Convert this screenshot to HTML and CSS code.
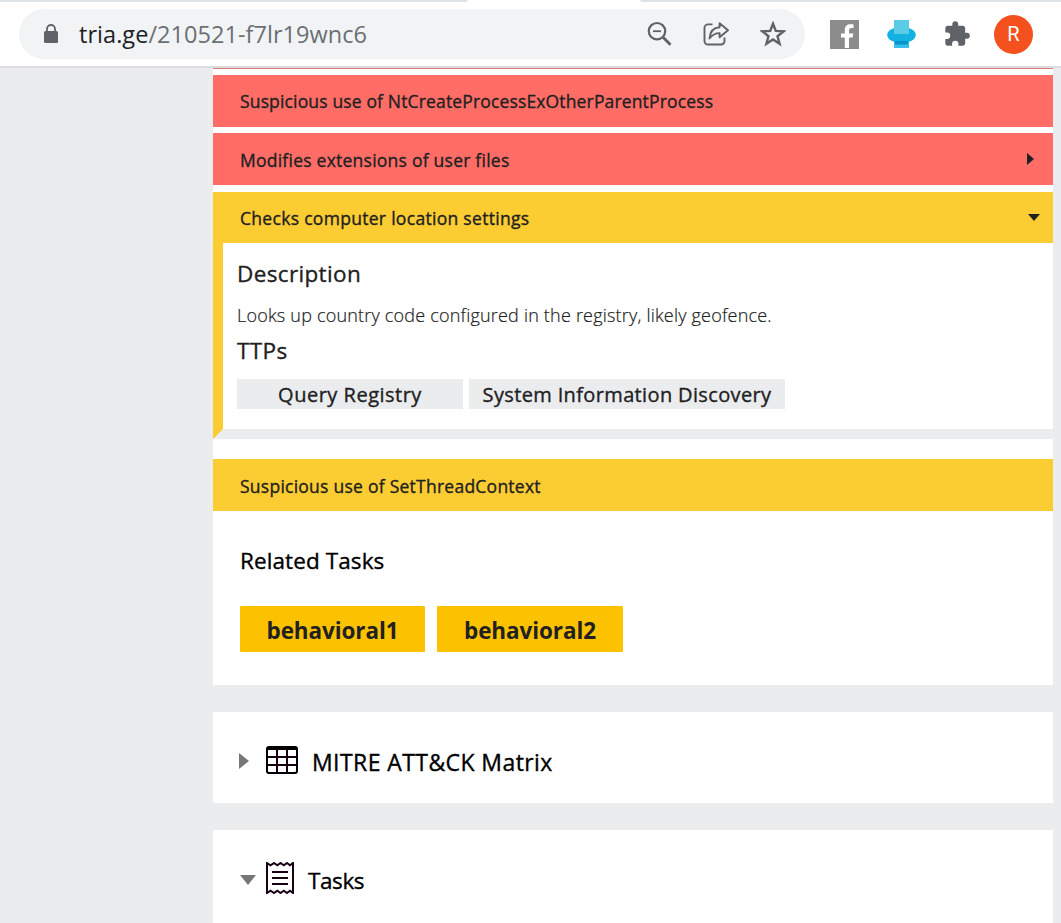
FILE: index.html
```html
<!DOCTYPE html>
<html lang="en">
<head>
<meta charset="utf-8">
<title>tria.ge</title>
<link rel="stylesheet" href="styles.css">
</head>
<body>
<header class="browser">
  <div class="tabs"><span class="tab tab-left"></span><span class="tab tab-right"></span></div>
  <div class="toolbar">
    <div class="address">
      <svg class="lock" width="16" height="20" viewBox="0 0 16 20"><path d="M4 8V5a4 4 0 0 1 8 0v3" fill="none" stroke="#5f6368" stroke-width="1.8"/><rect x="1" y="7" width="14" height="12" rx="1.5" fill="#5f6368"/></svg>
      <span class="url"><b class="host">tria.ge</b>/210521-f7lr19wnc6</span>
      <svg class="act" width="26" height="26" viewBox="0 0 26 26" fill="none" stroke="#5f6368"><circle cx="11" cy="10.2" r="8.2" stroke-width="2.2"/><path d="M7 10.2h8" stroke-width="1.8"/><path d="M17 16.2L24.500 23.700" stroke-width="2.8"/></svg>
      <svg class="act" width="26" height="26" viewBox="0 0 26 26" fill="none" stroke="#5f6368" stroke-width="1.9" stroke-linejoin="round"><path d="M9.5 3.4H5a3.5 3.5 0 0 0-3.5 3.5V20A3.500 3.500 0 0 0 5 23.500h13a3.500 3.500 0 0 0 3.500-3.500v-3.500"/><path d="M6.500 17.500C7 10.500 10.500 6.600 16.600 6.200V2.200L25 9.300l-8.400 7v-4.200C12 12 9.500 13.600 6.500 17.500z"/></svg>
      <svg class="act" width="26" height="26" viewBox="0 0 26 26" fill="none" stroke="#5f6368" stroke-width="2.400"><path d="M13 2.700l2.800 7.200 7.700.5-6 4.800 2.100 7.600L13 18.500l-6.600 4.300 2.100-7.600-6-4.800 7.700-.5z"/></svg>
    </div>
    <svg class="ext facebook" width="29" height="29" viewBox="0 0 29 29"><path d="M0 0h29v29H0z" fill="#8c8c8c"/><path d="M14.800 28V17.600H11v-4h3.800V10c0-3.800 2.200-5.700 5.600-5.700 1.600 0 3.100.2 3.100.2v3.600h-2c-1.700 0-2.500.9-2.500 2.300v3.200h4.300l-.7 4H19V28z" fill="#fff"/></svg>
    <svg class="ext printer" width="29" height="29" viewBox="0 0 29 29"><path d="M7 20h15v8H7z" fill="#36bfe8"/><ellipse cx="14.500" cy="15" rx="14.300" ry="8" fill="#13b1e2"/><path d="M7 0h15v14H7z" fill="#5bcbe6"/><path d="M8 21h13v3.500H8z" fill="#0795cc"/></svg>
    <svg class="ext puzzle" width="28" height="28" viewBox="0 0 24 24"><path fill="#5f6368" d="M20.500 11H19V7c0-1.100-.9-2-2-2h-4V3.500a2.500 2.500 0 0 0-5 0V5H4c-1.100 0-2 .9-2 2v3.800h1.500a2.700 2.700 0 0 1 0 5.400H2V20c0 1.100.9 2 2 2h3.800v-1.500a2.700 2.700 0 0 1 5.400 0V22H17c1.100 0 2-.9 2-2v-4h1.500a2.500 2.500 0 0 0 0-5z"/></svg>
    <span class="avatar">R</span>
  </div>
</header>
<main class="page">
  <section class="panel signatures">
    <div class="sliver"></div>
    <div class="sig red"><span class="t1">Suspicious use of NtCreateProcessExOtherParentProcess</span></div>
    <div class="sig red"><span class="t2">Modifies extensions of user files</span><i class="caret-right"></i></div>
    <div class="sig yellow open"><span class="t3">Checks computer location settings</span><i class="caret-down"></i></div>
    <div class="detail">
      <h3 class="desc-title">Description</h3>
      <p class="desc">Looks up country code configured in the registry, likely geofence.</p>
      <h3 class="ttps-title">TTPs</h3>
      <div class="ttps"><span class="ttp query">Query Registry</span><span class="ttp discovery">System Information Discovery</span></div>
    </div>
    <div class="sig yellow last"><span class="t4">Suspicious use of SetThreadContext</span></div>
    <h2 class="related">Related Tasks</h2>
    <div class="tasks"><span class="task first">behavioral1</span><span class="task">behavioral2</span></div>
  </section>
  <section class="panel fold matrix">
    <i class="fold-right"></i>
    <svg class="grid-icon" width="32" height="28" viewBox="0 0 32 28"><rect x="1" y="1" width="30" height="26" rx="2" fill="none" stroke="#000" stroke-width="2"/><path d="M1 2.500h30" stroke="#000" stroke-width="3"/><path d="M1 11h30M1 19h30M11 3v24M21 3v24" stroke="#170013" stroke-width="2"/></svg>
    <h2 class="matrix-title">MITRE ATT&amp;CK Matrix</h2>
  </section>
  <section class="panel fold tasklist">
    <i class="fold-down"></i>
    <svg class="receipt" width="28" height="32" viewBox="0 0 28 32" fill="none" stroke="#170013" stroke-width="2"><path d="M1 1l3.500 2.300L8 1l3.300 2.300L14.500 1l3.300 2.300L21 1l3 2.300L27 1v30l-3-2.300L21 31l-3.200-2.300-3.300 2.300-3.200-2.300L8 31l-3.500-2.300L1 31z"/><path d="M6 10h16M6 16h16M6 22h16"/></svg>
    <h2 class="tasks-title">Tasks</h2>
  </section>
</main>
</body>
</html>
```

FILE: styles.css
```css
* { box-sizing: border-box; }
body { margin: 0; height: 923px; overflow: hidden; background: #ebecee; color: #212121; font-family: "Open Sans", "Noto Sans", sans-serif; display: flex; flex-direction: column; }
h2, h3, p { margin: 0; white-space: nowrap; }
svg, i { flex: none; display: block; }
span { white-space: nowrap; }

.browser { height: 68px; flex: none; background: #fff; border-bottom: 2px solid #dadce0; }
.tabs { height: 2px; display: flex; justify-content: space-between; }
.tab { background: #dee1e6; }
.tab-left { width: 468px; border-bottom-right-radius: 4px 2px; }
.tab-right { width: 421px; border-bottom-left-radius: 4px 2px; }
.toolbar { height: 64px; display: flex; align-items: center; padding-left: 19px; }
.address { width: 786px; height: 50px; border-radius: 25px; background: #f1f3f4; display: flex; align-items: center; padding: 0 19px 0 24px; }
.url { flex: 1; margin-left: 20px; font-size: 23.5px; line-height: 32px; letter-spacing: 0.04px; color: #6b6f74; }
.host { font-weight: 400; color: #202124; }
.act + .act { margin-left: 31px; }
.facebook { margin-left: 25px; }
.printer { margin-left: 28px; }
.puzzle { margin-left: 27px; }
.avatar { width: 39px; height: 39px; margin-left: 23px; border-radius: 50%; background: #f4511e; color: #fff; font: 20px/39px Roboto, sans-serif; text-align: center; }

.page { width: 840px; margin-left: 213px; display: flex; flex-direction: column; gap: 27px; }
.panel { background: #fff; flex: none; }
.signatures { height: 617px; }
.sliver { height: 1px; margin-bottom: 6px; background: #dc7d78; }
.sig { height: 52px; display: flex; align-items: center; justify-content: space-between; padding: 0 13px 0 27px; margin-bottom: 6px; font-size: 17.5px; line-height: 24px; }
.sig, .ttp, .fold h2, .desc-title, .ttps-title, .related { -webkit-text-stroke: 0.35px currentColor; }
.t1 { letter-spacing: 0.15px; }
.t2 { letter-spacing: 0.24px; padding-top: 1px; }
.t3 { letter-spacing: 0.3px; }
.t4 { letter-spacing: 0.25px; padding-top: 1px; }
.red { background: #ff6d66; }
.yellow { background: #fccd32; }
.open { height: 51px; margin: 7px 0 0; }
.caret-right { margin-right: 6px; border-left: 7px solid #212121; border-top: 6.5px solid transparent; border-bottom: 6.5px solid transparent; }
.caret-down { border-top: 7px solid #212121; border-left: 6.5px solid transparent; border-right: 6.5px solid transparent; }
.detail { height: 196px; border-left: 10px solid #fccd32; border-bottom: 10px solid #ebecee; padding: 15px 0 0 14px; }
.desc-title, .ttps-title { font-size: 22.5px; font-weight: 400; line-height: 32px; letter-spacing: 0.36px; }
.desc { margin-top: 13px; font-size: 18px; font-weight: 300; line-height: 24px; letter-spacing: 0.2px; -webkit-text-stroke: 0.2px currentColor; }
.ttps-title { margin-top: 8px; }
.ttps { display: flex; gap: 6px; margin-top: 12px; }
.ttp { height: 30px; background: #ebecee; text-align: center; font-size: 20px; line-height: 31px; }
.query { width: 226px; letter-spacing: 0.5px; }
.discovery { width: 316px; letter-spacing: 0.36px; }
.last { margin: 20px 0 0; }
.related { margin: 34px 0 0 27px; color: #000; font-size: 22.5px; line-height: 32px; font-weight: 400; letter-spacing: 0.1px; }
.tasks { display: flex; gap: 12px; margin: 29px 0 0 27px; }
.task { width: 186px; height: 46px; border-radius: 1px; background: #fcc200; text-align: center; font-size: 22.5px; line-height: 49px; font-weight: 700; letter-spacing: -0.1px; }
.first { width: 185px; }

.fold { display: flex; align-items: flex-start; height: 91px; color: #000; }
.fold h2 { font-size: 22.5px; line-height: 32px; font-weight: 400; }
.fold-right { margin: 41px 17px 0 26px; border-left: 10px solid #777; border-top: 8px solid transparent; border-bottom: 8px solid transparent; }
.grid-icon { margin-top: 34px; }
.fold .matrix-title { margin: 34px 0 0 14px; font-size: 23px; letter-spacing: 0.42px; }
.tasklist { height: 93px; }
.fold-down { margin: 45px 10px 0 27px; border-top: 10px solid #777; border-left: 8px solid transparent; border-right: 8px solid transparent; }
.receipt { margin-top: 32px; }
.fold .tasks-title { margin: 35px 0 0 14px; letter-spacing: -0.4px; }
```
